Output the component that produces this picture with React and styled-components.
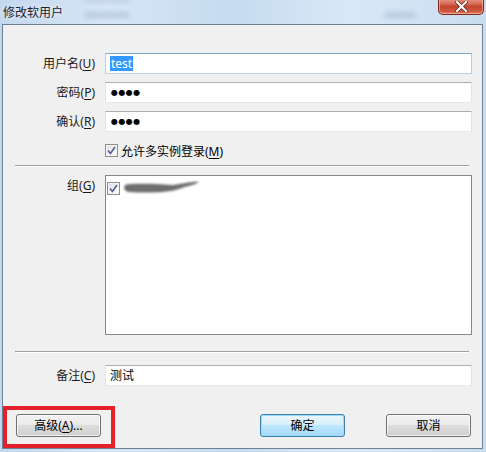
import React from 'react';
import styled, { createGlobalStyle, css } from 'styled-components';

const Global = createGlobalStyle`
  html, body { margin: 0; padding: 0; background: #cfe0f2; }
  body {
    font-family: "Noto Sans", "Noto Sans CJK SC", sans-serif;
    font-size: 12px;
    color: #000;
  }
`;

const Window = styled.div`
  position: relative;
  width: 486px;
  height: 452px;
  display: flex;
  flex-direction: column;
  overflow: hidden;
  background: linear-gradient(90deg, #c3d8ee 0%, #d6e6f6 22%, #c6dbf0 48%, #d9e8f7 72%, #c9ddf1 100%);
`;

const TitleBar = styled.div`
  position: relative;
  flex: none;
  height: 24px;
  display: flex;
  align-items: center;
  padding-left: 3px;
`;

const Title = styled.span`
  position: relative;
  font-size: 12px;
  line-height: 16px;
  color: #1b2430;
  margin-top: 1px;
  text-shadow: 0 0 6px rgba(255, 255, 255, 0.9);
`;

const GlassSmudge = styled.div`
  position: absolute;
  left: ${p => p.$x}px;
  top: ${p => p.$y}px;
  width: ${p => p.$w}px;
  height: ${p => p.$h}px;
  background: rgba(90, 115, 150, 0.22);
  filter: blur(2.5px);
  border-radius: 3px;
`;

const CloseButton = styled.div`
  position: absolute;
  top: -3px;
  right: 2px;
  width: 46px;
  height: 18px;
  box-sizing: border-box;
  border: 1px solid #7d2a1c;
  border-top: none;
  border-radius: 0 0 5px 5px;
  background: linear-gradient(#e9a597 0%, #d86d58 40%, #c2442c 55%, #cf5a3f 85%, #e08266 100%);
  box-shadow: inset 0 0 0 1px rgba(255, 200, 190, 0.55);
  display: flex;
  align-items: center;
  justify-content: center;
  padding-top: 2px;
`;

const Client = styled.div`
  flex: 1;
  margin: 0 3px 3px 2px;
  border: 1px solid #6e8094;
  background: #f0f0f0;
  display: flex;
  flex-direction: column;
  padding: 28px 10px 0 0;
`;

const Row = styled.div`
  display: grid;
  grid-template-columns: 92px 367px;
  column-gap: 10px;
  align-items: ${p => (p.$top ? 'start' : 'center')};
  margin-top: ${p => p.$mt || 0}px;
`;

const Label = styled.label`
  text-align: right;
  line-height: 16px;
  white-space: nowrap;
  color: #1a1a1a;
  padding-top: ${p => p.$pt || 0}px;
`;

const Key = styled.u`
  text-decoration: underline;
  text-underline-offset: 2px;
`;

const Input = styled.div`
  height: 21px;
  box-sizing: border-box;
  background: #fff;
  border: 1px solid;
  border-color: #abadb3 #e2e3ea #e3e9ef #e2e3ea;
  display: flex;
  align-items: center;
  padding-left: 4px;
  line-height: 16px;
  ${p =>
    p.$focus &&
    css`
      border-color: #7aa7cb #b3d0e8 #b8d4ea #b3d0e8;
    `}
`;

const Selected = styled.span`
  background: #3399ff;
  color: #fff;
  padding: 0 1px;
  line-height: 15px;
`;

const Dots = styled.span`
  font-family: "DejaVu Sans", sans-serif;
  font-size: 8px;
  letter-spacing: 0.4px;
  padding-left: 1px;
  color: #000;
`;

const CheckLine = styled.div`
  display: flex;
  align-items: center;
  gap: 3px;
  height: 21px;
`;

const Box = styled.span`
  flex: none;
  width: 13px;
  height: 13px;
  box-sizing: border-box;
  border: 1px solid #8e8f8f;
  background: linear-gradient(135deg, #dcdcdc 0%, #f4f4f4 60%, #ffffff 100%);
  box-shadow: inset 0 0 0 1px #f4f4f4;
  display: flex;
  align-items: center;
  justify-content: center;
`;

const Separator = styled.div`
  margin: ${p => p.$mt}px 3px 0 12px;
  border-top: 1px solid #a0a0a0;
  border-bottom: 1px solid #ffffff;
`;

const ListBox = styled.div`
  height: 160px;
  box-sizing: border-box;
  border: 1px solid #828790;
  background: #fff;
  padding: 4px 0 0 1px;
`;

const ListItem = styled.div`
  display: flex;
  align-items: center;
  gap: 3px;
`;

const ButtonBar = styled.div`
  display: flex;
  align-items: center;
  margin-top: 28px;
  padding-left: 13px;
`;

const Spacer = styled.div`
  width: ${p => p.$w}px;
  flex: none;
`;

const Button = styled.button`
  width: 85px;
  height: 23px;
  box-sizing: border-box;
  padding: 0;
  border: 1px solid #707070;
  border-radius: 3px;
  font-family: inherit;
  font-size: 12px;
  line-height: 16px;
  color: #000;
  background: linear-gradient(#f2f2f2 0%, #ebebeb 45%, #dddddd 50%, #cfcfcf 100%);
  box-shadow: inset 0 0 0 1px rgba(255, 255, 255, 0.75);
  ${p =>
    p.$default &&
    css`
      border-color: #3c7fb1;
      background: linear-gradient(#eaf6fd 0%, #d9f0fc 45%, #bee6fd 50%, #a7d9f5 100%);
      box-shadow: inset 0 0 0 1px #9ddcf9;
    `}
`;

const Annotation = styled.div`
  position: absolute;
  left: 3px;
  top: 406px;
  width: 112px;
  height: 42px;
  box-sizing: border-box;
  border: 4px solid #e3202b;
  pointer-events: none;
`;

const Check = () => (
  <svg width="9" height="9" viewBox="0 0 9 9">
    <path d="M1 4.6 L3.4 7.4 L8 1" fill="none" stroke="#4a5f97" strokeWidth="1.6" />
  </svg>
);

const Redacted = () => (
  <svg width="80" height="16" viewBox="0 0 80 16">
    <defs>
      <filter id="bl" x="-20%" y="-50%" width="140%" height="200%">
        <feGaussianBlur stdDeviation="1.1" />
      </filter>
    </defs>
    <g filter="url(#bl)" fill="#6e6e6e">
      <path d="M2 5 C10 3 30 4 50 5 C60 4 70 1 76 2 C72 5 64 6 56 9 C44 13 24 13 6 12 C2 12 0 8 2 5 Z" />
    </g>
  </svg>
);

export default function App() {
  return (
    <>
      <Global />
      <Window>
        <TitleBar>
          <GlassSmudge $x={84} $y={-2} $w={46} $h={4} />
          <GlassSmudge $x={84} $y={12} $w={46} $h={6} />
          <GlassSmudge $x={384} $y={12} $w={32} $h={6} />
          <Title>修改软用户</Title>
          <CloseButton>
            <svg width="13" height="11" viewBox="0 0 13 11">
              <path d="M2 1 L11 10 M11 1 L2 10" stroke="#5a1a10" strokeWidth="3.6" strokeLinecap="square" />
              <path d="M2 1 L11 10 M11 1 L2 10" stroke="#ffffff" strokeWidth="2.2" strokeLinecap="square" />
            </svg>
          </CloseButton>
        </TitleBar>
        <Client>
          <Row>
            <Label>用户名(<Key>U</Key>)</Label>
            <Input $focus>
              <Selected>test</Selected>
            </Input>
          </Row>
          <Row $mt={8}>
            <Label>密码(<Key>P</Key>)</Label>
            <Input>
              <Dots>●●●●</Dots>
            </Input>
          </Row>
          <Row $mt={8}>
            <Label>确认(<Key>R</Key>)</Label>
            <Input>
              <Dots>●●●●</Dots>
            </Input>
          </Row>
          <Row $mt={8}>
            <span />
            <CheckLine>
              <Box>
                <Check />
              </Box>
              <span>允许多实例登录(<Key>M</Key>)</span>
            </CheckLine>
          </Row>
          <Separator $mt={4} />
          <Row $mt={8} $top>
            <Label $pt={3}>组(<Key>G</Key>)</Label>
            <ListBox>
              <ListItem>
                <Box>
                  <Check />
                </Box>
                <Redacted />
              </ListItem>
            </ListBox>
          </Row>
          <Separator $mt={16} />
          <Row $mt={12}>
            <Label>备注(<Key>C</Key>)</Label>
            <Input>测试</Input>
          </Row>
          <ButtonBar>
            <Button>高级(<Key>A</Key>)...</Button>
            <Spacer $w={159} />
            <Button $default>确定</Button>
            <Spacer $w={41} />
            <Button>取消</Button>
          </ButtonBar>
        </Client>
        <Annotation />
      </Window>
    </>
  );
}
